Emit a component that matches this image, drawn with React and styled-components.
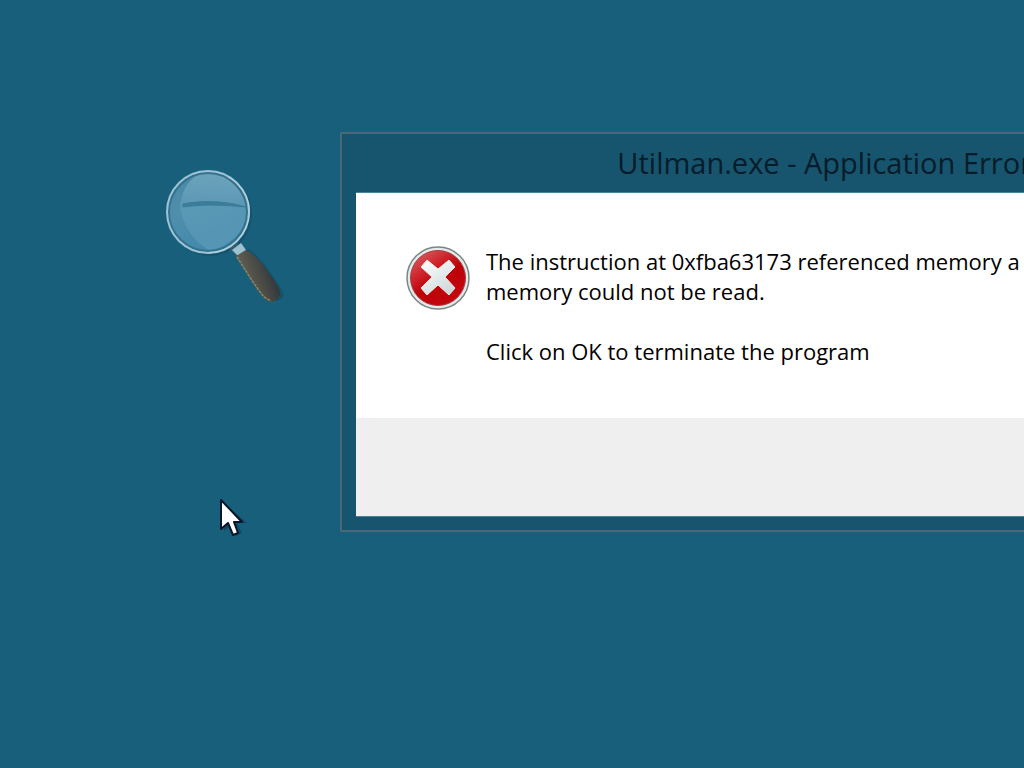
import React from "react";
import styled, { createGlobalStyle } from "styled-components";

const GlobalStyle = createGlobalStyle`
  body {
    margin: 0;
    font-family: "Open Sans", "Noto Sans", sans-serif;
    color: #000;
  }
`;

const Desktop = styled.main`
  position: relative;
  min-height: 100vh;
  overflow: hidden;
  background: #185f7b;
`;

const DesktopItem = styled.svg`
  position: absolute;
  left: ${(p) => p.$x}px;
  top: ${(p) => p.$y}px;
`;

const Window = styled.section`
  position: absolute;
  box-sizing: border-box;
  left: 340px;
  right: -24px;
  top: 132px;
  padding: 0 14px 13px;
  border: 2px solid #49687b;
  background: #17546e;
`;

const TitleBar = styled.header`
  display: flex;
  justify-content: flex-end;
  height: 58px;
`;

const Title = styled.h1`
  margin: 0;
  font-size: 29px;
  line-height: 58px;
  font-weight: 400;
  white-space: nowrap;
  color: #051c2a;
`;

const Client = styled.div`
  border: 1px solid #4a8299;
  border-left: 0;
  background: #fff;
`;

const Content = styled.div`
  display: flex;
  gap: 16px;
  padding: 53px 0 52px 50px;
`;

const ErrorIcon = styled.svg`
  flex: none;
`;

const Message = styled.div`
  font-size: 22px;
  line-height: 30px;
  white-space: nowrap;
`;

const Paragraph = styled.p`
  margin: 0 0 30px;

  &:last-child {
    margin-bottom: 0;
  }
`;

const Footer = styled.footer`
  height: 98px;
  background: #efefef;
`;

function Magnifier() {
  return (
    <DesktopItem $x={160} $y={164} width="130" height="144" viewBox="0 0 130 144" aria-hidden="true">
      <defs>
        <linearGradient id="lens" x1="0" y1="0" x2="0.4" y2="1">
          <stop offset="0" stopColor="#4787a4" />
          <stop offset="0.5" stopColor="#4f8fae" />
          <stop offset="1" stopColor="#4389aa" />
        </linearGradient>
        <linearGradient id="shine" x1="0" y1="0" x2="0" y2="1">
          <stop offset="0" stopColor="#7eb0c6" />
          <stop offset="1" stopColor="#5f9ab5" />
        </linearGradient>
        <linearGradient id="handle" x1="0" y1="0.5" x2="0.7" y2="0.2">
          <stop offset="0.2" stopColor="#5f5f52" />
          <stop offset="0.65" stopColor="#4b4b46" />
          <stop offset="1" stopColor="#343b3c" />
        </linearGradient>
      </defs>
      <path d="M79 88l10-3c10 8 20 19 28 34 8 10 9 16-1 18z" fill="#0e4056" opacity="0.4" />
      <circle cx="50" cy="50" r="42" fill="#0e4056" opacity="0.35" />
      <path d="M69 85l8-6 9 7-10 6z" fill="#315c70" />
      <path d="M72 86l9-7 5 7-8 6z" fill="#9cc1d0" />
      <path d="M76 92l10-6c9 5 17 13 23 23 7 10 12 16 11 22-2 6-7 8-13 6-6-5-12-14-17-22z" fill="url(#handle)" />
      <path d="M77 93c7 11 18 29 27 40l7 4" fill="none" stroke="#8a8769" strokeWidth="1.5" strokeDasharray="3 1" />
      <circle cx="48" cy="48" r="41" fill="url(#lens)" />
      <path d="M20 43C21 30 27 16 38 11c22-7 44 9 49 34-21-6-42-6-67-2z" fill="url(#shine)" opacity="0.65" />
      <path d="M20 43c22-4 45-4 67 2-1 21-15 36-37 42-16-9-27-25-30-44z" fill="#609eba" opacity="0.6" />
      <path d="M23 40c21-4 42-3 63 3-20-2-42-3-63 0z" fill="#347693" stroke="#347693" strokeWidth="1" opacity="0.8" />
      <circle cx="48" cy="48" r="39" fill="none" stroke="#35718b" strokeWidth="2" />
      <circle cx="48" cy="48" r="41" fill="none" stroke="#9ac3d5" strokeWidth="2" />
      <path d="M68 13c22 12 28 38 13 59-8 11-19 16-32 17" fill="none" stroke="#b9d6e2" strokeWidth="1" />
    </DesktopItem>
  );
}

function Cross() {
  return (
    <ErrorIcon width="64" height="64" viewBox="0 0 64 64" role="img" aria-label="Error">
      <defs>
        <linearGradient id="red" x1="0" y1="0" x2="0.7" y2="1">
          <stop offset="0" stopColor="#dc6b6b" />
          <stop offset="0.35" stopColor="#cf2930" />
          <stop offset="0.6" stopColor="#bd0007" />
          <stop offset="1" stopColor="#c40810" />
        </linearGradient>
        <linearGradient id="cross" x1="0" y1="0" x2="0.6" y2="1">
          <stop offset="0" stopColor="#fff" />
          <stop offset="1" stopColor="#d0dadc" />
        </linearGradient>
      </defs>
      <circle cx="32" cy="32" r="31" fill="#e3eaea" stroke="#7b8585" strokeWidth="1.5" />
      <circle cx="32" cy="32" r="27.5" fill="url(#red)" stroke="#a54043" strokeWidth="1" />
      <path d="M21 14l11 9 11-9 6 7-10 10 10 11-6 7-11-10-11 10-6-7 11-11-11-10z" fill="url(#cross)" stroke="#f4e6e2" strokeWidth="1" strokeLinejoin="round" />
    </ErrorIcon>
  );
}

function Pointer() {
  return (
    <DesktopItem $x={219} $y={497} width="32" height="44" viewBox="0 0 32 44" aria-hidden="true">
      <path d="M5 6v28l7-6 5 11 6-3-5-10h10z" fill="#063448" opacity="0.45" />
      <path d="M2 3v29l7-6 5 12 5-2-4-11h8z" fill="#fff" stroke="#07142a" strokeWidth="2" strokeLinejoin="round" />
    </DesktopItem>
  );
}

export default function App() {
  return (
    <>
      <GlobalStyle />
      <Desktop>
        <Magnifier />
        <Window role="alertdialog" aria-labelledby="title" aria-describedby="message">
          <TitleBar>
            <Title id="title">Utilman.exe - Application Error</Title>
          </TitleBar>
          <Client>
            <Content>
              <Cross />
              <Message id="message">
                <Paragraph>
                  The instruction at 0xfba63173 referenced memory a
                  <br />
                  memory could not be read.
                </Paragraph>
                <Paragraph>Click on OK to terminate the program</Paragraph>
              </Message>
            </Content>
            <Footer />
          </Client>
        </Window>
        <Pointer />
      </Desktop>
    </>
  );
}
